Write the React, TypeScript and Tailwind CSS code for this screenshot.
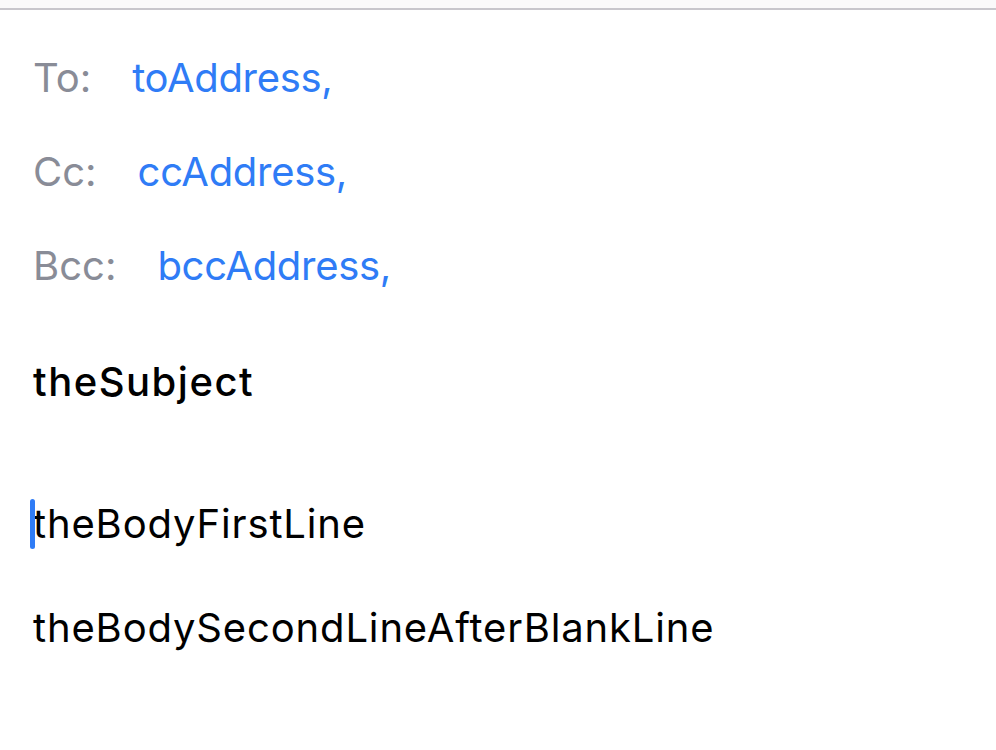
import React from 'react';

const font = { fontFamily: 'Inter, "Noto Sans", sans-serif' };

const fields = [
  { label: 'To:', value: 'toAddress,' },
  { label: 'Cc:', value: 'ccAddress,' },
  { label: 'Bcc:', value: 'bccAddress,' },
];

export default function App() {
  return (
    <div className="w-[996px] h-[750px] bg-white overflow-hidden" style={font}>
      <div className="h-[10px] bg-[#fafafa] border-b-2 border-[#c8c7cc]" />
      <div className="pl-[33px] pt-[46px] text-[40px] leading-[44px]">
        {fields.map((f) => (
          <div key={f.label} className="flex gap-[41px] h-[94px]">
            <span className="text-[#898c97]">{f.label}</span>
            <span className="text-[#2f7cf6] tracking-[-0.3px]">{f.value}</span>
          </div>
        ))}
        <div className="mt-[22px] font-medium text-black tracking-[1.5px]">theSubject</div>
        <div className="relative mt-[98px] text-black tracking-[0.85px]">
          <span className="absolute -left-[3px] top-[-3px] w-[5px] h-[50px] rounded-full bg-[#2f7cf6]" />
          theBodyFirstLine
        </div>
        <div className="mt-[60px] text-black tracking-[0.85px]">theBodySecondLineAfterBlankLine</div>
      </div>
    </div>
  );
}
